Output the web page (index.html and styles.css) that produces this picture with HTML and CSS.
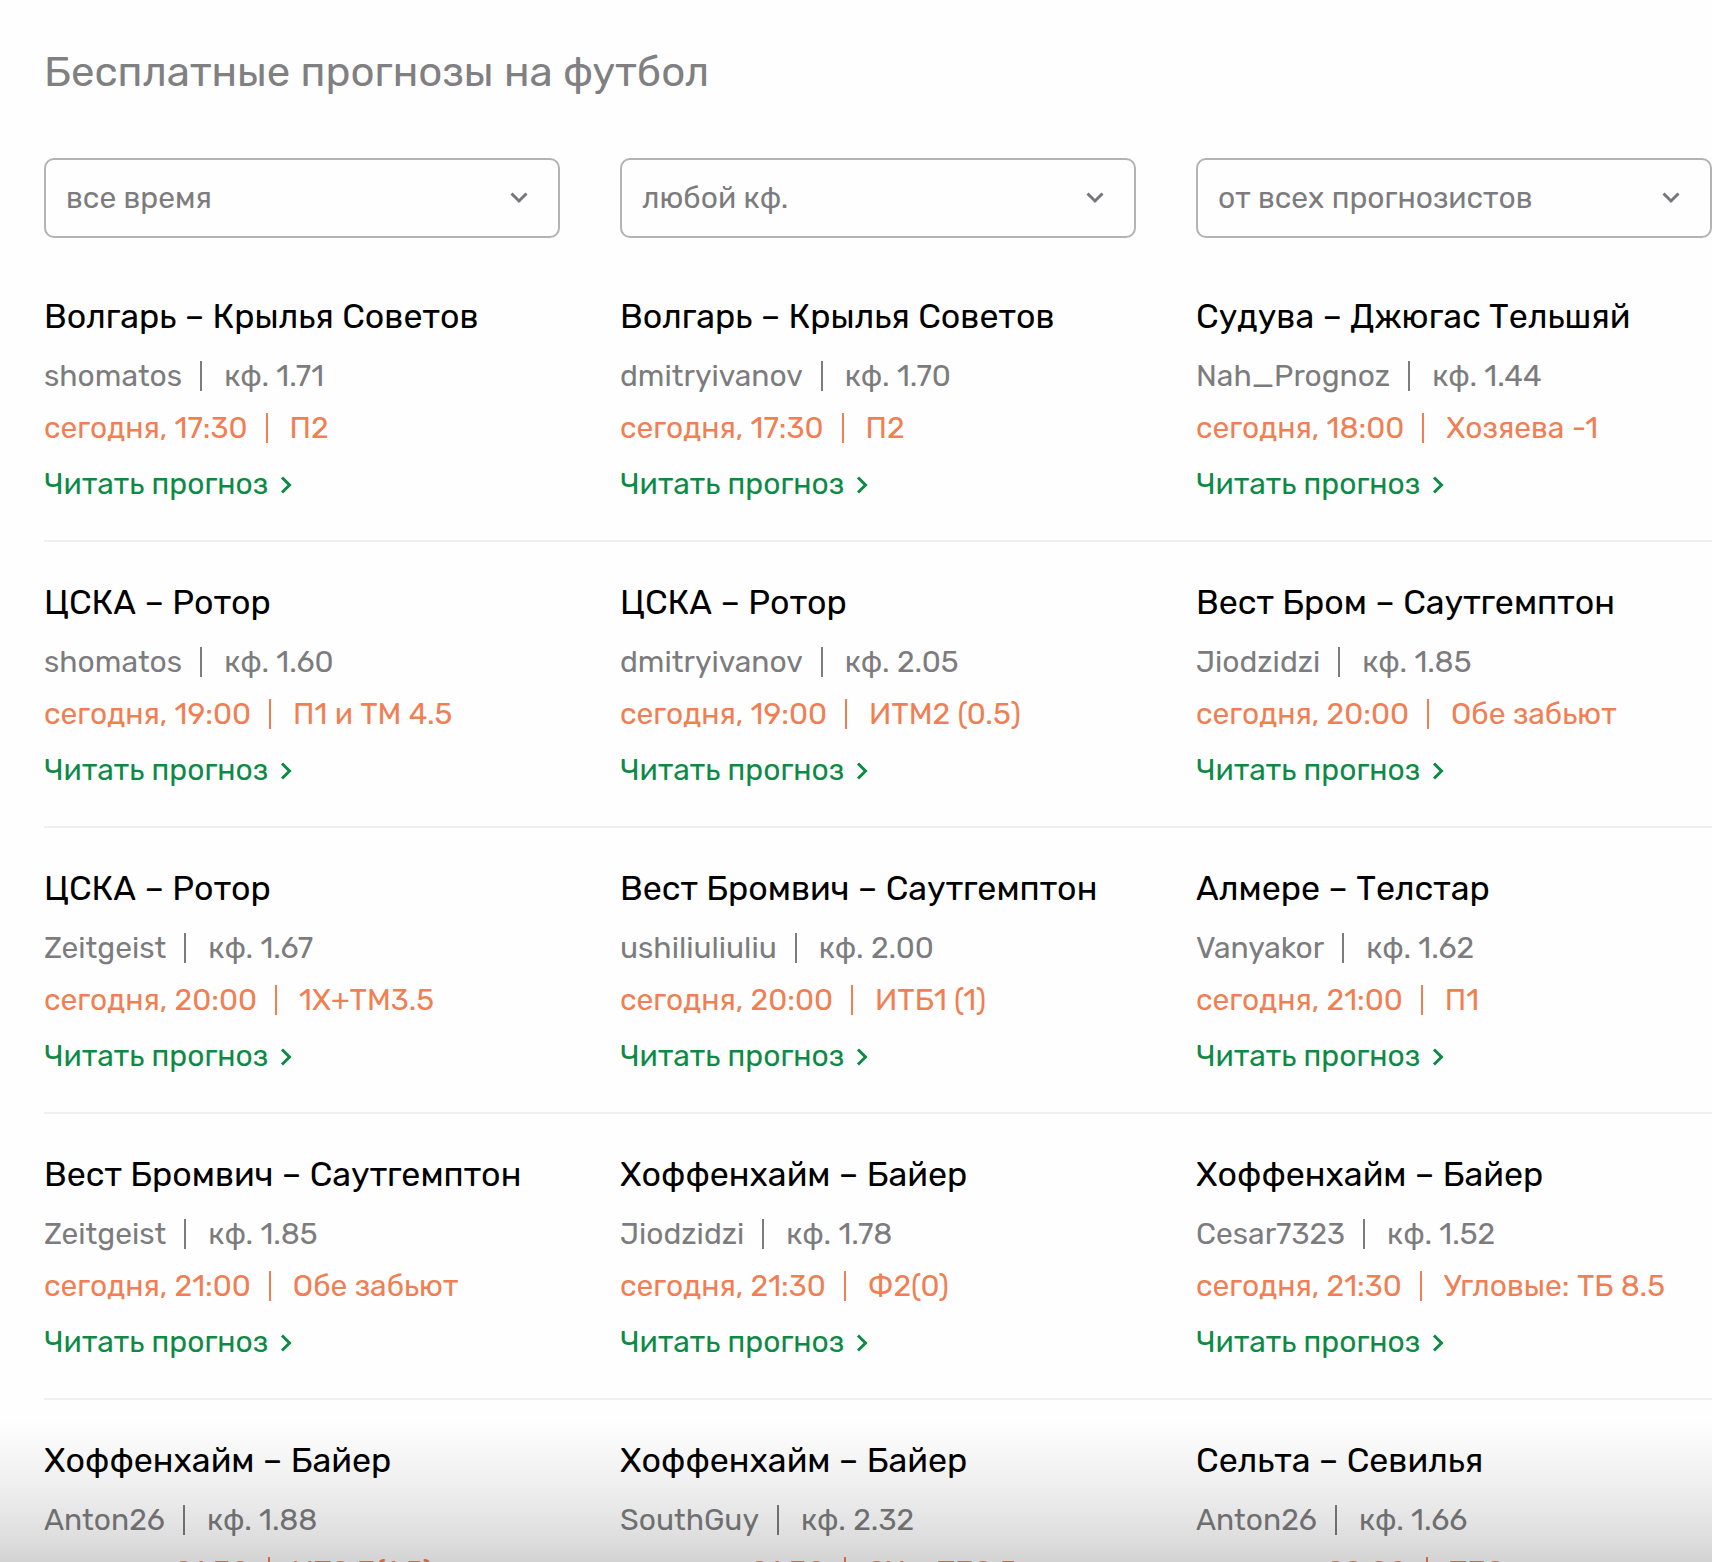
FILE: index.html
```
<!DOCTYPE html>
<html lang="ru">
<head>
    <meta charset="UTF-8">
    <meta name="viewport" content="width=device-width, initial-scale=1.0">
    <title>Бесплатные прогнозы на футбол</title>
    <link rel="stylesheet" href="styles.css">
</head>
<body>
    <svg class="sprite" aria-hidden="true">
        <symbol id="arrow-down" viewBox="0 0 18 12">
            <path d="M1.5 1.5L9 9L16.5 1.5" fill="none" stroke="currentColor" stroke-width="3"/>
        </symbol>
        <symbol id="arrow-right" viewBox="0 0 12 18">
            <path d="M2 1.5L9.5 9L2 16.5" fill="none" stroke="currentColor" stroke-width="3"/>
        </symbol>
    </svg>

    <div class="container">
        <h1>Бесплатные прогнозы на футбол</h1>

        <form class="filters">
            <div class="filter">
                <select id="period" aria-label="Период">
                    <option>все время</option>
                    <option>сегодня</option>
                    <option>завтра</option>
                </select>
                <svg class="filter-arrow"><use href="#arrow-down"/></svg>
            </div>
            <div class="filter">
                <select id="odds" aria-label="Коэффициент">
                    <option>любой кф.</option>
                    <option>до 2.00</option>
                    <option>от 2.00</option>
                </select>
                <svg class="filter-arrow"><use href="#arrow-down"/></svg>
            </div>
            <div class="filter">
                <select id="author" aria-label="Прогнозист">
                    <option>от всех прогнозистов</option>
                    <option>от лучших</option>
                </select>
                <svg class="filter-arrow"><use href="#arrow-down"/></svg>
            </div>
        </form>

        <div class="row">
            <div class="card">
                <h2>Волгарь – Крылья Советов</h2>
                <div class="author"><span>shomatos</span><i class="bar"></i><span>кф. 1.71</span></div>
                <div class="bet"><span>сегодня, 17:30</span><i class="bar"></i><span>П2</span></div>
                <a class="more" href="#">Читать прогноз<svg><use href="#arrow-right"/></svg></a>
            </div>
            <div class="card">
                <h2>Волгарь – Крылья Советов</h2>
                <div class="author"><span>dmitryivanov</span><i class="bar"></i><span>кф. 1.70</span></div>
                <div class="bet"><span>сегодня, 17:30</span><i class="bar"></i><span>П2</span></div>
                <a class="more" href="#">Читать прогноз<svg><use href="#arrow-right"/></svg></a>
            </div>
            <div class="card">
                <h2>Судува – Джюгас Тельшяй</h2>
                <div class="author"><span>Nah_Prognoz</span><i class="bar"></i><span>кф. 1.44</span></div>
                <div class="bet"><span>сегодня, 18:00</span><i class="bar"></i><span>Хозяева -1</span></div>
                <a class="more" href="#">Читать прогноз<svg><use href="#arrow-right"/></svg></a>
            </div>
        </div>

        <div class="row">
            <div class="card">
                <h2>ЦСКА – Ротор</h2>
                <div class="author"><span>shomatos</span><i class="bar"></i><span>кф. 1.60</span></div>
                <div class="bet"><span>сегодня, 19:00</span><i class="bar"></i><span>П1 и ТМ 4.5</span></div>
                <a class="more" href="#">Читать прогноз<svg><use href="#arrow-right"/></svg></a>
            </div>
            <div class="card">
                <h2>ЦСКА – Ротор</h2>
                <div class="author"><span>dmitryivanov</span><i class="bar"></i><span>кф. 2.05</span></div>
                <div class="bet"><span>сегодня, 19:00</span><i class="bar"></i><span>ИТМ2 (0.5)</span></div>
                <a class="more" href="#">Читать прогноз<svg><use href="#arrow-right"/></svg></a>
            </div>
            <div class="card">
                <h2>Вест Бром – Саутгемптон</h2>
                <div class="author"><span>Jiodzidzi</span><i class="bar"></i><span>кф. 1.85</span></div>
                <div class="bet"><span>сегодня, 20:00</span><i class="bar"></i><span>Обе забьют</span></div>
                <a class="more" href="#">Читать прогноз<svg><use href="#arrow-right"/></svg></a>
            </div>
        </div>

        <div class="row">
            <div class="card">
                <h2>ЦСКА – Ротор</h2>
                <div class="author"><span>Zeitgeist</span><i class="bar"></i><span>кф. 1.67</span></div>
                <div class="bet"><span>сегодня, 20:00</span><i class="bar"></i><span>1Х+ТМ3.5</span></div>
                <a class="more" href="#">Читать прогноз<svg><use href="#arrow-right"/></svg></a>
            </div>
            <div class="card">
                <h2>Вест Бромвич – Саутгемптон</h2>
                <div class="author"><span>ushiliuliuliu</span><i class="bar"></i><span>кф. 2.00</span></div>
                <div class="bet"><span>сегодня, 20:00</span><i class="bar"></i><span>ИТБ1 (1)</span></div>
                <a class="more" href="#">Читать прогноз<svg><use href="#arrow-right"/></svg></a>
            </div>
            <div class="card">
                <h2>Алмере – Телстар</h2>
                <div class="author"><span>Vanyakor</span><i class="bar"></i><span>кф. 1.62</span></div>
                <div class="bet"><span>сегодня, 21:00</span><i class="bar"></i><span>П1</span></div>
                <a class="more" href="#">Читать прогноз<svg><use href="#arrow-right"/></svg></a>
            </div>
        </div>

        <div class="row">
            <div class="card">
                <h2>Вест Бромвич – Саутгемптон</h2>
                <div class="author"><span>Zeitgeist</span><i class="bar"></i><span>кф. 1.85</span></div>
                <div class="bet"><span>сегодня, 21:00</span><i class="bar"></i><span>Обе забьют</span></div>
                <a class="more" href="#">Читать прогноз<svg><use href="#arrow-right"/></svg></a>
            </div>
            <div class="card">
                <h2>Хоффенхайм – Байер</h2>
                <div class="author"><span>Jiodzidzi</span><i class="bar"></i><span>кф. 1.78</span></div>
                <div class="bet"><span>сегодня, 21:30</span><i class="bar"></i><span>Ф2(0)</span></div>
                <a class="more" href="#">Читать прогноз<svg><use href="#arrow-right"/></svg></a>
            </div>
            <div class="card">
                <h2>Хоффенхайм – Байер</h2>
                <div class="author"><span>Cesar7323</span><i class="bar"></i><span>кф. 1.52</span></div>
                <div class="bet"><span>сегодня, 21:30</span><i class="bar"></i><span>Угловые: ТБ 8.5</span></div>
                <a class="more" href="#">Читать прогноз<svg><use href="#arrow-right"/></svg></a>
            </div>
        </div>

        <div class="row">
            <div class="card">
                <h2>Хоффенхайм – Байер</h2>
                <div class="author"><span>Anton26</span><i class="bar"></i><span>кф. 1.88</span></div>
                <div class="bet"><span>сегодня, 21:30</span><i class="bar"></i><span>ИТ2 Б(1.5)</span></div>
                <a class="more" href="#">Читать прогноз<svg><use href="#arrow-right"/></svg></a>
            </div>
            <div class="card">
                <h2>Хоффенхайм – Байер</h2>
                <div class="author"><span>SouthGuy</span><i class="bar"></i><span>кф. 2.32</span></div>
                <div class="bet"><span>сегодня, 21:30</span><i class="bar"></i><span>2Х и ТБ2.5</span></div>
                <a class="more" href="#">Читать прогноз<svg><use href="#arrow-right"/></svg></a>
            </div>
            <div class="card">
                <h2>Сельта – Севилья</h2>
                <div class="author"><span>Anton26</span><i class="bar"></i><span>кф. 1.66</span></div>
                <div class="bet"><span>сегодня, 22:00</span><i class="bar"></i><span>ТБ2</span></div>
                <a class="more" href="#">Читать прогноз<svg><use href="#arrow-right"/></svg></a>
            </div>
        </div>
    </div>

    <div class="shade"></div>
</body>
</html>
```
FILE: styles.css
```
* {
    box-sizing: border-box;
}

body {
    margin: 0;
    height: 100vh;
    overflow: hidden;
    background-color: #fefefe;
    font-family: Rubik, Roboto, sans-serif;
}

.sprite {
    display: none;
}

.container {
    padding: 47px 0 0 44px;
}

h1 {
    margin: 0 0 61px;
    font-size: 42px;
    line-height: 50px;
    font-weight: 400;
    color: #808082;
}

.filters,
.row {
    display: grid;
    grid-template-columns: repeat(3, 1fr);
    gap: 60px;
}

.filters {
    margin-bottom: 18px;
}

.filter {
    position: relative;
}

.filter select {
    display: block;
    width: 100%;
    height: 80px;
    padding: 0 60px 0 20px;
    border: 2px solid #b3b3b5;
    border-radius: 10px;
    background-color: #fefefe;
    color: #7c7c7f;
    font-family: inherit;
    font-size: 30px;
    appearance: none;
    cursor: pointer;
}

.filter-arrow {
    position: absolute;
    right: 32px;
    top: 34px;
    width: 18px;
    height: 12px;
    color: #77777a;
    pointer-events: none;
}

.row {
    padding: 41px 0 38px;
    border-bottom: 2px solid #f0f0f0;
}

h2 {
    margin: 0 0 21px;
    font-size: 34px;
    line-height: 40px;
    font-weight: 400;
    color: #000;
}

.author,
.bet,
.more {
    display: flex;
    align-items: center;
    font-size: 30px;
    line-height: 36px;
    white-space: nowrap;
}

.author {
    margin-bottom: 16px;
    color: #7c7c7f;
}

.bet {
    margin-bottom: 20px;
    color: #f07f54;
}

.bar {
    width: 2px;
    height: 30px;
    margin: 0 22px 0 18px;
    background-color: currentColor;
}

.more {
    color: #0d8a45;
    text-decoration: none;
}

.more:hover {
    text-decoration: underline;
}

.more svg {
    width: 12px;
    height: 18px;
    margin: 2px 0 0 12px;
}

/* darkening at the bottom of the screen */
.shade {
    position: fixed;
    left: 0;
    right: 0;
    bottom: 0;
    height: 142px;
    pointer-events: none;
    background: linear-gradient(rgba(0,0,0,0), rgba(0,0,0,0.035) 28%, rgba(0,0,0,0.075) 56%, rgba(0,0,0,0.13) 85%, rgba(0,0,0,0.17));
}
```
